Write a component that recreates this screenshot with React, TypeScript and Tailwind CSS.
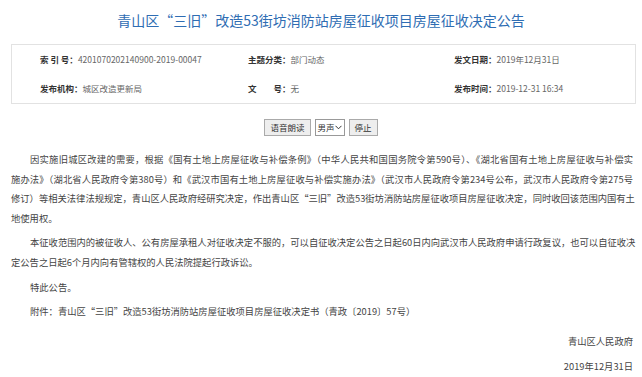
const info = [
  [
    { label: "索 引 号：", value: "4201070202140900-2019-00047" },
    { label: "主题分类：", value: "部门动态" },
    { label: "发文日期：", value: "2019年12月31日" },
  ],
  [
    { label: "发布机构：", value: "城区改造更新局" },
    { label: "文　　号：", value: "无" },
    { label: "发布时间：", value: "2019-12-31 16:34" },
  ],
];

const para1 = [
  "因实施旧城区改建的需要，根据《国有土地上房屋征收与补偿条例》（中华人民共和国国务院令第590号）、《湖北省国有土地上房屋征收与补偿实",
  "施办法》（湖北省人民政府令第380号）和《武汉市国有土地上房屋征收与补偿实施办法》（武汉市人民政府令第234号公布，武汉市人民政府令第275号",
  "修订）等相关法律法规规定，青山区人民政府经研究决定，作出青山区“三旧”改造53街坊消防站房屋征收项目房屋征收决定，同时收回该范围内国有土",
  "地使用权。",
];

const para2 = [
  "本征收范围内的被征收人、公有房屋承租人对征收决定不服的，可以自征收决定公告之日起60日内向武汉市人民政府申请行政复议，也可以自征收决",
  "定公告之日起6个月内向有管辖权的人民法院提起行政诉讼。",
];

function Lines({ lines }: { lines: string[] }) {
  return (
    <div className="mb-[5px]">
      {lines.map((line, i) => (
        <div
          key={i}
          className={
            (i === 0 ? "pl-[19px] " : "") +
            (i < lines.length - 1 ? "text-justify [text-align-last:justify] " : "") +
            "whitespace-nowrap"
          }
        >
          {line}
        </div>
      ))}
    </div>
  );
}

export default function App() {
  return (
    <div
      lang="zh-CN"
      className="w-[642px] h-[377px] overflow-hidden bg-white text-[#333] font-['Microsoft_YaHei','Noto_Sans_CJK_SC',sans-serif]"
    >
      <h1 className="pt-[10px] text-center text-[14px] leading-[20px] text-[#2f6db3]">
        青山区“三旧”改造53街坊消防站房屋征收项目房屋征收决定公告
      </h1>

      <div className="ml-[11px] mt-[14px] w-[625px] h-[60px] border border-[#e2e2e2] pl-[28px] text-[8.5px]">
        {info.map((row, r) => (
          <div key={r} className="grid grid-cols-[208px_206px_1fr] h-[29px] items-center">
            {row.map((cell, c) => (
              <div key={c} className="whitespace-nowrap">
                <span className="font-bold text-[#333]">{cell.label}</span>
                <span className="text-[#666]">{cell.value}</span>
              </div>
            ))}
          </div>
        ))}
      </div>

      <div className="mt-[15px] flex justify-center items-center gap-[4px] text-[8.5px] text-[#333]">
        <button className="h-[17px] px-[5px] bg-[#eeeeee] border border-[#aaaaaa] leading-none">
          语音朗读
        </button>
        <div className="h-[17px] w-[30px] flex items-center justify-between px-[2px] bg-white border border-[#999]">
          <span>男声</span>
          <svg width="7" height="5" viewBox="0 0 7 5">
            <path d="M0.5 0.8 L3.5 3.8 L6.5 0.8" fill="none" stroke="#333" strokeWidth="1" />
          </svg>
        </div>
        <button className="h-[17px] px-[5px] bg-[#eeeeee] border border-[#aaaaaa] leading-none">
          停止
        </button>
      </div>

      <div className="mt-[14px] ml-[11px] w-[622px] text-[9.3px] leading-[19.6px] text-[#444]">
        <Lines lines={para1} />
        <Lines lines={para2} />
        <div className="pl-[19px] mb-[5px]">特此公告。</div>
        <div className="pl-[19px] whitespace-nowrap">
          附件：青山区“三旧”改造53街坊消防站房屋征收项目房屋征收决定书（青政〔2019〕57号）
        </div>
        <div className="mt-[10px] text-right">青山区人民政府</div>
        <div className="mt-[6px] text-right">2019年12月31日</div>
      </div>
    </div>
  );
}
